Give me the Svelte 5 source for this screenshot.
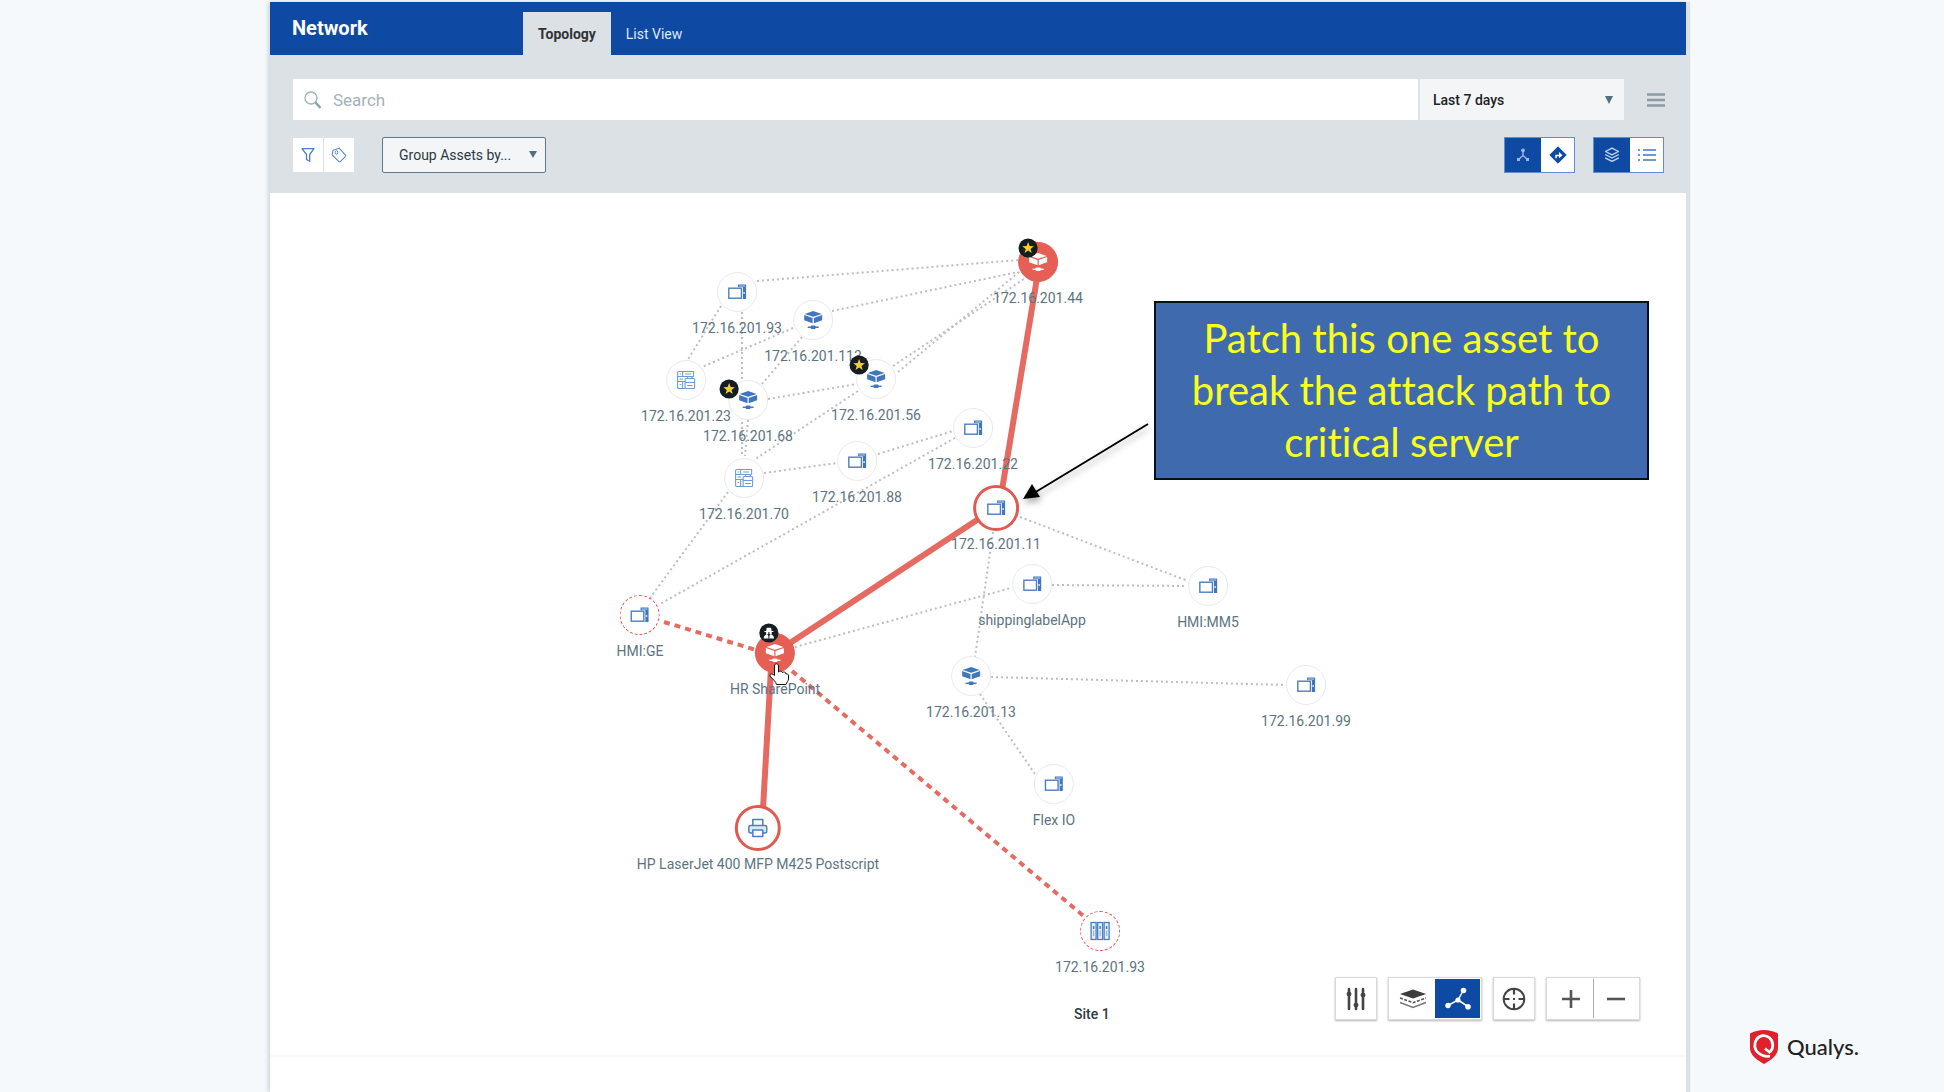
<script>
  const nodes = [
    { id: 'a93', x: 467, y: 99, label: '172.16.201.93', icon: 'hmi' },
    { id: 'b113', x: 543, y: 127, label: '172.16.201.113', icon: 'switch' },
    { id: 'c23', x: 416, y: 187, label: '172.16.201.23', icon: 'plc' },
    { id: 'd68', x: 478, y: 207, label: '172.16.201.68', icon: 'switch', badge: 'star', bx: -19, by: -11 },
    { id: 'e56', x: 606, y: 186, label: '172.16.201.56', icon: 'switch', badge: 'star', bx: -17, by: -14 },
    { id: 'f70', x: 474, y: 285, label: '172.16.201.70', icon: 'plc' },
    { id: 'g88', x: 587, y: 268, label: '172.16.201.88', icon: 'hmi' },
    { id: 'h22', x: 703, y: 235, label: '172.16.201.22', icon: 'hmi' },
    { id: 'i44', x: 768, y: 69, label: '172.16.201.44', icon: 'switch', state: 'critical', badge: 'star', bx: -10, by: -14 },
    { id: 'j11', x: 726, y: 315, label: '172.16.201.11', icon: 'hmi', state: 'exposed' },
    { id: 'ge', x: 370, y: 422, label: 'HMI:GE', icon: 'hmi', state: 'reachable' },
    { id: 'hr', x: 505, y: 460, label: 'HR SharePoint', icon: 'switch', state: 'critical', badge: 'threat', bx: -6, by: -20 },
    { id: 'hp', x: 488, y: 635, label: 'HP LaserJet 400 MFP M425 Postscript', icon: 'printer', state: 'exposed' },
    { id: 'ship', x: 762, y: 391, label: 'shippinglabelApp', icon: 'hmi' },
    { id: 'mm5', x: 938, y: 393, label: 'HMI:MM5', icon: 'hmi' },
    { id: 'p13', x: 701, y: 483, label: '172.16.201.13', icon: 'switch' },
    { id: 'q99', x: 1036, y: 492, label: '172.16.201.99', icon: 'hmi' },
    { id: 'flex', x: 784, y: 591, label: 'Flex IO', icon: 'hmi' },
    { id: 's93', x: 830, y: 738, label: '172.16.201.93', icon: 'rack', state: 'reachable' }
  ];

  const links = [
    [487, 88, 749, 67], [451, 113, 417, 168], [472, 119, 472, 264], [562, 118, 748, 79],
    [523, 135, 432, 174], [532, 144, 492, 191], [498, 206, 587, 191], [588, 198, 484, 267],
    [478, 227, 475, 263], [623, 173, 754, 86], [628, 179, 749, 79], [494, 280, 567, 270],
    [608, 261, 683, 238], [685, 245, 390, 411], [458, 299, 380, 405], [723, 339, 705, 464],
    [750, 324, 918, 388], [782, 392, 917, 393], [525, 454, 741, 395], [721, 484, 1016, 492],
    [710, 501, 765, 581]
  ];
  const attack = [[767, 85, 732, 297], [710, 325, 520, 450], [501, 475, 493, 616]];
  const possible = [[394, 429, 486, 457], [522, 478, 816, 725]];

  let search = $state('');
  let period = $state('Last 7 days');
  let group = $state('Group Assets by...');
</script>

{#snippet icon(name)}
  <svg viewBox="0 0 20 20" width="20" height="20" aria-hidden="true">
    {#if name === 'hmi'}
      <path d="M11 2.500H19V17H11Z" fill="#3f76bd" />
      <path d="M12 4H18M12 5.700H15" stroke="#b8d0ee" stroke-width="1" fill="none" />
      <circle cx="17" cy="11" r=".9" fill="#dbe8f6" />
      <rect x="1.500" y="6" width="13.500" height="10.500" fill="#fff" stroke="#fff" stroke-width="1.600" />
      <rect x="1.700" y="6.200" width="12.600" height="10" fill="#fff" stroke="#4b7ec3" stroke-width="1.400" />
    {:else if name === 'switch'}
      <path d="M10 1 18.500 3.900 10 6.800 1.500 3.900Z" fill="currentColor" />
      <path d="M1 5 9.400 7.900V13.200L1 10.200Z" fill="currentColor" />
      <path d="M19 5 10.600 7.900V13.200L19 10.200Z" fill="currentColor" />
      <path d="M4.500 17.300H15.500" stroke="currentColor" stroke-width="1.400" />
      <rect x="7.500" y="15.600" width="5" height="3.500" rx="1" fill="currentColor" />
    {:else if name === 'plc'}
      <g fill="none" stroke="#6f9bd2" stroke-width="1.100">
        <path d="M10.500 18.500H2.500a1 1 0 0 1-1-1V2.500a1 1 0 0 1 1-1H17.500V6.500" />
        <path d="M1.500 6.500H17.500M1.500 11.500H9M6.500 1.500V6.500M6.500 11.500V18.500M3.500 4H5M9 4H15M3.500 9H7M3.500 14.500H5" />
        <rect x="9" y="8.500" width="9.500" height="10" rx="1" />
        <path d="M9 12.500H18.500M11.500 8.500V6.500H16V8.500M11 15.500H16.500" />
      </g>
    {:else if name === 'printer'}
      <g fill="#fff" stroke="#4a7ec2" stroke-width="1.500" stroke-linejoin="round">
        <path d="M5 8V1.500H15V8" />
        <rect x="1" y="7.500" width="18" height="7.500" rx="2" fill="#dce8f5" />
        <path d="M5 12H15V18.500H5Z" />
      </g>
    {:else}
      <g fill="#e6effa" stroke="#4a7ec2" stroke-width="1.300">
        <rect x="1" y="1.500" width="5" height="17" />
        <rect x="7.500" y="1.500" width="5" height="17" />
        <rect x="14" y="1.500" width="5" height="17" />
      </g>
      <path d="M3.500 5V8M10 5V8M16.500 5V8" stroke="#4a7ec2" stroke-width="1.500" />
      <path d="M3.500 9.500V15M10 9.500V15M16.500 9.500V15" stroke="#8fb3e0" stroke-width="1.200" />
    {/if}
  </svg>
{/snippet}

<div class="page">
  <main class="panel">
    <header class="header">
      <h1>Network</h1>
      <nav>
        <a class="tab active" href="#topology">Topology</a>
        <a class="tab" href="#list">List View</a>
      </nav>
    </header>

    <section class="toolbar">
      <div class="row">
        <div class="searchbar">
          <label class="search">
            <svg viewBox="0 0 18 18" width="18" height="18" aria-hidden="true">
              <circle cx="7" cy="7" r="6" fill="none" stroke="#9fb0b8" stroke-width="1.300" />
              <path d="M11.500 11.500 16.500 16.800" stroke="#8fa3ad" stroke-width="2.500" />
            </svg>
            <input type="text" placeholder="Search" aria-label="Search" bind:value={search} />
          </label>
          <div class="pick period">
            <select aria-label="Period" bind:value={period}>
              <option>Last 7 days</option>
              <option>Last 30 days</option>
            </select>
            <svg viewBox="0 0 8 8" width="8" height="8" aria-hidden="true"><path d="M0 0H8L4 8Z" fill="#546e7e" /></svg>
          </div>
        </div>
        <button class="menu" aria-label="Menu">
          <svg viewBox="0 0 18 14" width="18" height="14"><path d="M0 1.500H18M0 7H18M0 12.500H18" stroke="#8b9ba5" stroke-width="2.500" /></svg>
        </button>
      </div>

      <div class="row">
        <div class="filters">
          <button aria-label="Filter">
            <svg viewBox="0 0 14 16" width="14" height="16"><path d="M1 1.700H13L8.700 7.500V14.300L5.500 12.500V7.500Z" fill="none" stroke="#4a7fc6" stroke-width="1.300" stroke-linejoin="round" /></svg>
          </button>
          <button aria-label="Tags">
            <svg viewBox="0 0 16 16" width="16" height="16"><path d="M2 3.200 8.200 1.200 14.500 8.200a1 1 0 0 1 0 1.200L9.300 14.600a1 1 0 0 1-1.300 0L1.200 8Z" fill="none" stroke="#5c8ccc" stroke-width="1.100" stroke-linejoin="round" /><ellipse cx="5.500" cy="5.500" rx="1.300" ry="1.800" fill="none" stroke="#5c8ccc" /></svg>
          </button>
        </div>
        <div class="pick group">
          <select aria-label="Group assets" bind:value={group}>
            <option>Group Assets by...</option>
            <option>Site</option>
          </select>
          <svg viewBox="0 0 8 8" width="8" height="8" aria-hidden="true"><path d="M0 0H8L4 7Z" fill="#546e7e" /></svg>
        </div>
        <div class="toggles">
          <div class="toggle">
            <button class="on" aria-label="Graph" aria-pressed="true">
              <svg viewBox="0 0 14 14" width="14" height="14"><path d="M7 3V7.500L2.500 11.500M7 7.500 11.500 11.500" fill="none" stroke="#9db6dc" stroke-width="1.400" /><circle cx="7" cy="2.300" r="1.900" fill="#9db6dc" /><path d="M1 10H4V13H1ZM10 10H13V13H10Z" fill="#9db6dc" /></svg>
            </button>
            <button aria-label="Routes" aria-pressed="false">
              <svg viewBox="0 0 18 18" width="18" height="18"><path d="M9 .8 17.200 9 9 17.200 .8 9Z" fill="#0e49a3" stroke="#0e49a3" stroke-linejoin="round" /><path d="M6.300 12.200V8.700H10V6L13.500 9.300 10 12.200V10.200H7.800V12.200Z" fill="#fff" /></svg>
            </button>
          </div>
          <div class="toggle">
            <button class="on" aria-label="Layers" aria-pressed="true">
              <svg viewBox="0 0 16 16" width="16" height="16" fill="none" stroke="#c9d8ef" stroke-width="1.300" stroke-linejoin="round"><path d="M8 1.200 14.500 4.500 8 7.800 1.500 4.500Z" /><path d="M1.200 7.500 8 11 14.800 7.500M1.200 10.800 8 14.300 14.800 10.800" /></svg>
            </button>
            <button aria-label="List" aria-pressed="false">
              <svg viewBox="0 0 18 14" width="18" height="14" stroke="#6d99d2" stroke-width="2"><path d="M5 2H18M5 7H18M5 12H18" /><path d="M0 2H2M0 7H2M0 12H2" /></svg>
            </button>
          </div>
        </div>
      </div>
    </section>

    <section class="canvas" aria-label="Network topology">
      <svg class="edges" aria-hidden="true">
        {#each links as [x1, y1, x2, y2]}
          <line class="link" {x1} {y1} {x2} {y2} />
        {/each}
        {#each attack as [x1, y1, x2, y2]}
          <line class="attack" {x1} {y1} {x2} {y2} />
        {/each}
        {#each possible as [x1, y1, x2, y2]}
          <line class="possible" {x1} {y1} {x2} {y2} />
        {/each}
      </svg>

      {#each nodes as n (n.id)}
        <button class="node {n.state ?? ''}" style:left="{n.x}px" style:top="{n.y}px">
          <span class="disc">{@render icon(n.icon)}</span>
          <span class="name">{n.label}</span>
          {#if n.badge}
            <svg class="badge" style:--bx="{n.bx}px" style:--by="{n.by}px" viewBox="0 0 20 20" width="20" height="20" aria-hidden="true">
              <circle cx="10" cy="10" r="9.600" fill="#161d22" />
              {#if n.badge === 'star'}
                <path d="M10 4 11.500 8.100 15.800 8.200 12.400 10.900 13.600 15.100 10 12.600 6.400 15.100 7.600 10.900 4.200 8.200 8.500 8.100Z" fill="#f3cf2b" />
              {:else}
                <g fill="#fff"><path d="M7.300 8 7.800 4.800H12.200L12.700 8Z" /><path d="M5.500 8H14.500V9H5.500Z" /><path d="M4.800 15.500C4.800 12.600 6.800 11.800 8 11L10 13 12 11C13.200 11.800 15.200 12.600 15.200 15.500Z" /><circle cx="8.300" cy="10" r="1.300" /><circle cx="11.700" cy="10" r="1.300" /></g>
                <path d="M10 11.500V15.500" stroke="#161d22" />
              {/if}
            </svg>
          {/if}
        </button>
      {/each}

      <svg class="edges" aria-hidden="true">
        <g class="pointer">
          <path d="M878 231 764 300" stroke="#000" stroke-width="2" />
          <path d="M753 306 762 291 770 304Z" />
        </g>
        <path class="hand" d="M504.500 473C504.500 470 508.500 470 508.500 473V479C510 477.500 512 478 512.300 479.500 514 478.500 516 479 516 481 517 480.500 518.500 481 518.500 483V486C518.500 488 516.500 489.500 516 491.500H506.500C506 488.500 502.500 486 500 483 499 480.500 502 480 504.500 482.500Z" />
      </svg>

      <p class="callout">Patch this one asset to break the attack path to critical server</p>
      <span class="site">Site 1</span>

      <div class="controls">
        <div class="box">
          <button aria-label="Settings">
            <svg viewBox="0 0 20 24" width="20" height="24" stroke="#444" fill="#444"><path d="M3 2V22M10 2V22M17 2V22" stroke-width="2.600" stroke-linecap="round" /><circle cx="3" cy="7" r="2" /><circle cx="10" cy="18" r="2" /><circle cx="17" cy="8" r="2" /></svg>
          </button>
        </div>
        <div class="box">
          <button class="wide" aria-label="Layer view">
            <svg viewBox="0 0 28 20" width="28" height="20"><path d="M14 .5 27 5 14 9.500 1 5Z" fill="#3c3c3c" /><g fill="none" stroke="#555" stroke-width="1.500"><path d="M1 9 14 13.700 27 9" stroke-dasharray="3 1.500" /><path d="M1 13.500 14 18.500 27 13.500" stroke="#777" /></g></svg>
          </button>
          <button class="wide on" aria-label="Graph view">
            <svg viewBox="0 0 28 24" width="28" height="24"><path d="M19.500 3 14 13 4 18.500M14 13 24 19.500" fill="none" stroke="#fff" stroke-width="1.500" /><g fill="#fff"><circle cx="19.500" cy="3.500" r="2.800" /><circle cx="14" cy="13" r="2.600" /><circle cx="4" cy="18.500" r="2.700" /><circle cx="24" cy="19.800" r="2.800" /></g></svg>
          </button>
        </div>
        <div class="box">
          <button aria-label="Center">
            <svg viewBox="0 0 24 24" width="24" height="24" fill="none" stroke="#444"><circle cx="12" cy="12" r="10.300" stroke-width="2" /><path d="M12 2V7.500M12 16.500V22M2 12H7.500M16.500 12H22" stroke-width="2.200" /><path d="M11 12H13" stroke-width="2" /></svg>
          </button>
        </div>
        <div class="box zoom">
          <button class="wide" aria-label="Zoom in">
            <svg viewBox="0 0 18 18" width="18" height="18"><path d="M0 9H18M9 0V18" stroke="#555" stroke-width="2.600" /></svg>
          </button>
          <button class="wide" aria-label="Zoom out">
            <svg viewBox="0 0 18 18" width="18" height="18"><path d="M0 9H18" stroke="#555" stroke-width="2.600" /></svg>
          </button>
        </div>
      </div>
    </section>
    <footer class="foot"></footer>
  </main>

  <aside class="brand">
    <svg viewBox="0 0 28 34" width="28" height="34" aria-hidden="true">
      <path d="M14 0C19 0 24 1.300 28 3.500V18C28 25.500 21 30 14 34 7 30 0 25.500 0 18V3.500C4 1.300 9 0 14 0Z" fill="#e0202a" />
      <path d="M20.500 21.500A9 9.600 0 1 0 8.500 23C11 25.200 15 26.700 20 26.200" fill="none" stroke="#fff" stroke-width="2.800" />
      <path d="M15 18.500 20.500 23" stroke="#fff" stroke-width="2.800" />
    </svg>
    <span>Qualys.</span>
  </aside>
</div>

<style>
  :global(body) { background: #f5f9fc; }
  .page {
    display: grid;
    grid-template-columns: 270px minmax(0, 1fr) 258px;
    min-height: 100vh;
    box-sizing: border-box;
    padding-top: 2px;
    font-family: Roboto, sans-serif;
    color: #2c3a43;
  }
  .panel {
    grid-column: 2;
    display: flex;
    flex-direction: column;
    background: #fff;
    box-shadow: 4px 0 1px #dce1e6, -2px 0 4px #cdd5da;
  }
  button, select, input { font: inherit; color: inherit; border: 0; margin: 0; padding: 0; background: none; outline: 0; }
  button { cursor: pointer; }
  svg { display: block; }

  .header { display: flex; height: 53px; background: #0e49a3; color: #fff; }
  h1 { margin: 0; padding: 14px 0 0 22px; width: 231px; font-size: 20px; line-height: 25px; font-weight: 700; }
  nav { display: flex; padding-top: 10px; }
  .tab { padding: 0 15px; font-size: 14px; line-height: 44px; height: 43px; color: #dfe8f6; text-decoration: none; }
  .tab.active { background: #dce1e5; color: #2f3336; font-weight: 700; }

  .toolbar { display: flex; flex-direction: column; gap: 17px; padding: 24px 20px 20px 23px; background: #dce1e5; }
  .row { display: flex; align-items: center; }
  .searchbar { flex: 1; display: flex; gap: 2px; height: 41px; }
  .search { flex: 1; display: flex; align-items: center; gap: 11px; padding-left: 11px; background: #fff; }
  .search input { flex: 1; font-size: 17px; }
  .search input::placeholder { color: #a3b1b8; opacity: 1; }
  .pick { display: flex; align-items: center; background: #f3f5f7; font-size: 14px; }
  .pick select { flex: 1; appearance: none; align-self: stretch; }
  .period { width: 204px; box-sizing: border-box; padding: 0 11px 0 13px; color: #1d2226; font-weight: 500; }
  .menu { margin-left: 23px; padding-right: 1px; }
  .filters { display: flex; gap: 1px; }
  .filters button { display: grid; place-items: center; width: 30px; height: 34px; background: #fff; }
  .group { width: 164px; height: 36px; box-sizing: border-box; margin-left: 28px; padding: 0 8px 0 16px; border: 1px solid #60788a; border-radius: 2px; color: #2c3a43; }
  .toggles { display: flex; gap: 18px; margin-left: auto; padding-right: 2px; }
  .toggle { display: flex; border: 1px solid #5f8fce; background: #fff; }
  .toggle button { display: grid; place-items: center; width: 33px; height: 34px; }
  .toggle .on { width: 36px; background: #0e49a3; }

  .canvas { position: relative; flex: 1; min-height: 862px; border-bottom: 2px solid #fafafa; }
  .foot { height: 35px; }
  .edges { position: absolute; inset: 0; width: 100%; height: 100%; overflow: visible; pointer-events: none; }
  .link { stroke: #b9bec5; stroke-width: 2; stroke-dasharray: 2 3; }
  .attack { stroke: #e46a62; stroke-width: 6; }
  .possible { stroke: #e46a62; stroke-width: 4; stroke-dasharray: 6 5; }
  .pointer { filter: drop-shadow(1px 4px 3px #0005); }
  .hand { fill: #fff; stroke: #111; stroke-width: 1; stroke-linejoin: round; }

  .node {
    position: absolute;
    display: flex;
    flex-direction: column;
    align-items: center;
    gap: 8px;
    height: 40px;
    transform: translate(-50%, -20px);
    font-size: 14px;
    line-height: 16px;
    color: #5c7482;
    white-space: nowrap;
  }
  .disc { display: grid; place-items: center; flex: none; box-sizing: border-box; width: 40px; height: 40px; border: 1px solid #ece9ea; border-radius: 50%; background: #fff; color: #3f76bd; }
  .critical .disc { border-color: #e65f55; background: #e65f55; color: #fff; }
  .exposed .disc { width: 46px; height: 46px; margin: -3px; border: 3px solid #e05a52; }
  .reachable .disc { border: 1px dashed #e05a52; }
  .badge { position: absolute; left: calc(50% - 10px + var(--bx)); top: calc(10px + var(--by)); }

  .callout {
    position: absolute;
    left: 884px;
    top: 108px;
    width: 495px;
    box-sizing: border-box;
    margin: 0;
    padding: 9px 30px 10px;
    border: 2px solid #05101c;
    background: #3f6bae;
    color: #fbff1c;
    font: 40px/52px Lato, sans-serif;
    font-variant-ligatures: none;
    text-align: center;
  }
  .site { position: absolute; left: 804px; top: 811px; font-size: 14px; line-height: 20px; font-weight: 500; }

  .controls { position: absolute; right: 46px; bottom: 35px; display: flex; gap: 11px; }
  .box { display: flex; padding: 1px; border: 1px solid #d9d9d9; box-shadow: 0 1px 2px #b5b5b5; background: #fff; }
  .box button { display: grid; place-items: center; width: 38px; height: 39px; }
  .box .wide { width: 45px; }
  .box .on { background: #0e49a3; }
  .zoom .wide + .wide { border-left: 1px solid #aaa; }

  .brand { grid-column: 3; display: flex; align-items: center; align-self: end; gap: 9px; padding: 0 0 28px 64px; color: #222; font: 500 22px/28px Lato, sans-serif; }
</style>
